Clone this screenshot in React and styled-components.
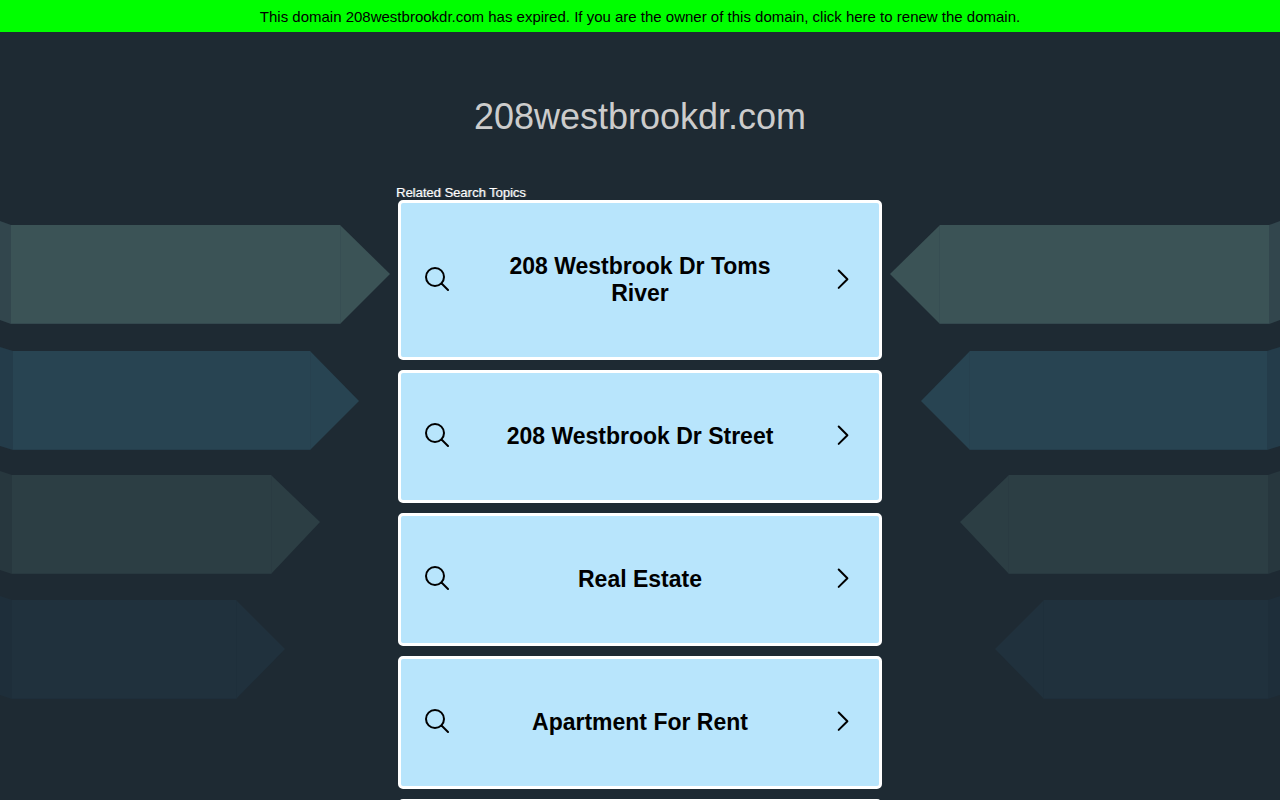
import React from 'react';
import styled, { createGlobalStyle } from 'styled-components';

const domain = '208westbrookdr.com';

const topics = [
  '208 Westbrook Dr Toms River',
  '208 Westbrook Dr Street',
  'Real Estate',
  'Apartment For Rent'
];

// start and end bound the flat part, tip is the arrow point
const ribbons = [
  { top: 225, start: 11, end: 340, tip: 390, tipY: 274, color: '#3b5356', fold: '#32464d' },
  { top: 351, start: 13, end: 310, tip: 359, tipY: 401, color: '#284452', fold: '#243c4a' },
  { top: 475, start: 12, end: 271, tip: 320, tipY: 522, color: '#2c3e44', fold: '#27373e' },
  { top: 600, start: 12, end: 236, tip: 285, tipY: 649, color: '#20313d', fold: '#1e2e3a' }
];

const Ribbons = ({ side }) => (
  <RibbonArt side={side} width="400" height="800" viewBox="0 0 400 800" aria-hidden="true">
    <g transform={side === 'right' ? 'translate(400 0) scale(-1 1)' : undefined}>
      {ribbons.map(({ top, start, end, tip, tipY, color, fold }) => (
        <g key={top}>
          <path d={`M0 ${top - 4}L${start} ${top}V${top + 99}L0 ${top + 95}Z`} fill={fold} />
          <path
            d={`M${start} ${top}H${end}L${tip} ${tipY}L${end} ${top + 99}H${start}Z`}
            fill={color}
          />
          <path d={`M${end + 0.5} ${top + 1}V${top + 98}`} stroke={fold} strokeOpacity="0.35" />
          <path d={`M${start} ${top + 98.5}H${end}`} stroke={fold} strokeOpacity="0.7" />
        </g>
      ))}
    </g>
  </RibbonArt>
);

const SearchIcon = () => (
  <Icon viewBox="0 0 24 27" aria-hidden="true">
    <circle cx="10" cy="10" r="9" />
    <path d="M16.5 16.5L23 23" />
  </Icon>
);

const ArrowIcon = () => (
  <Icon viewBox="0 0 24 27" aria-hidden="true">
    <path d="M7.7 3.5L16.4 12.2L7.7 20.9" />
  </Icon>
);

const App = () => {
  return (
    <>
      <GlobalStyle />
      <Page>
        <Ribbons side="left" />
        <Ribbons side="right" />
        <Banner href="#renew">
          This domain {domain} has expired. If you are the owner of this domain, click here to renew
          the domain.
        </Banner>
        <Title>{domain}</Title>
        <Content>
          <ListTitle>Related Search Topics</ListTitle>
          <TopicList>
            {topics.map(topic => (
              <li key={topic}>
                <TopicLink href="#search">
                  <SearchIcon />
                  <TopicText>{topic}</TopicText>
                  <ArrowIcon />
                </TopicLink>
              </li>
            ))}
            <EmptyTopic aria-hidden="true" />
          </TopicList>
        </Content>
      </Page>
    </>
  );
};

// Styled Components
const GlobalStyle = createGlobalStyle`
  * {
    box-sizing: border-box;
  }

  html {
    scrollbar-width: none;
  }

  body {
    margin: 0;
    background-color: #1e2a33;
    font-family: 'Liberation Sans', Arial, sans-serif;
  }
`;

const Page = styled.div`
  position: relative;
  min-height: 100vh;
  overflow: hidden;
`;

const RibbonArt = styled.svg`
  position: absolute;
  top: 0;
  ${props => props.side}: 0;
`;

const Banner = styled.a`
  display: block;
  position: relative;
  padding: 9px 8px 7px;
  background-color: #00ff00;
  color: #000;
  font-size: 15px;
  line-height: 16px;
  text-align: center;
  text-decoration: none;
`;

const Title = styled.h1`
  position: relative;
  margin: 0;
  padding: 64px 16px 48px;
  color: #ccc;
  font-size: 36px;
  font-weight: 400;
  line-height: 42px;
  text-align: center;
`;

const Content = styled.main`
  position: relative;
  max-width: 488px;
  margin: 0 auto;
`;

const ListTitle = styled.h2`
  margin: 0;
  color: #fff;
  font-size: 13px;
  font-weight: 400;
  line-height: 14px;
  text-shadow: 1px 0 0 rgba(255, 255, 255, 0.4);
`;

const TopicList = styled.ul`
  display: flex;
  flex-direction: column;
  gap: 10px;
  margin: 0;
  padding: 0 2px 10px;
  list-style: none;
`;

const TopicLink = styled.a`
  display: flex;
  align-items: center;
  padding: 50px 24px;
  border: 3px solid #fff;
  border-radius: 5px;
  background-color: #b8e5fc;
  color: #000;
  text-decoration: none;
`;

const EmptyTopic = styled.li`
  min-height: 133px;
  border: 3px solid #fff;
  border-radius: 5px;
  background-color: #b8e5fc;
`;

const TopicText = styled.span`
  flex: 1;
  padding: 0 32px;
  font-size: 23px;
  font-weight: 700;
  line-height: 27px;
  text-align: center;
`;

const Icon = styled.svg`
  flex: none;
  width: 24px;
  height: 27px;
  fill: none;
  stroke: #000;
  stroke-width: 2;
  stroke-linecap: round;
  stroke-linejoin: round;
`;

export default App;
